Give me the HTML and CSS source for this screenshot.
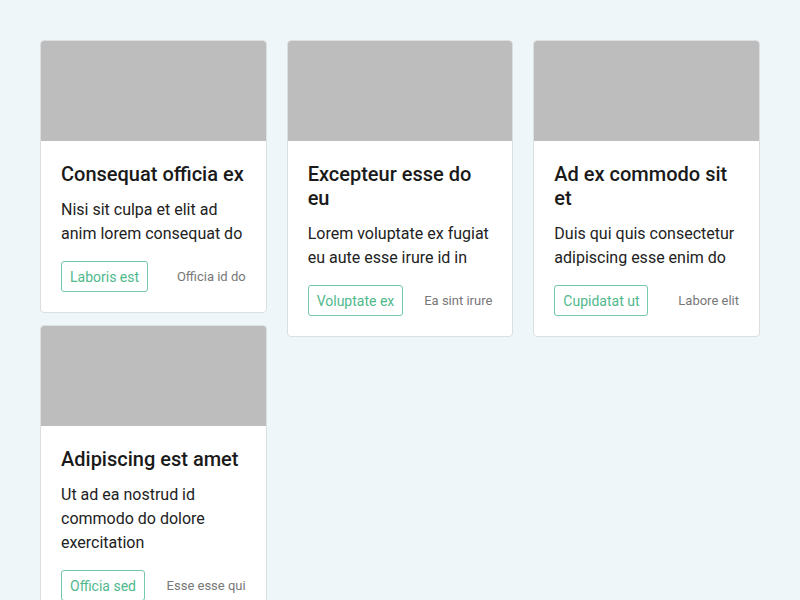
FILE: index.html
```html
<!DOCTYPE html>
<html>
<head>
<meta charset="utf-8">
<link rel="stylesheet" href="styles.css">
</head>
<body>
<div class="masonry">
  <div class="col">
    <div class="card">
      <div class="thumb"></div>
      <div class="body">
        <h2 class="title">Consequat officia ex</h2>
        <p class="text">Nisi sit culpa et elit ad anim lorem consequat do</p>
        <div class="foot"><span class="btn">Laboris est</span><span class="meta">Officia id do</span></div>
      </div>
    </div>
    <div class="card">
      <div class="thumb"></div>
      <div class="body">
        <h2 class="title">Adipiscing est amet</h2>
        <p class="text">Ut ad ea nostrud id commodo do dolore exercitation</p>
        <div class="foot"><span class="btn">Officia sed</span><span class="meta">Esse esse qui</span></div>
      </div>
    </div>
  </div>
  <div class="col">
    <div class="card">
      <div class="thumb"></div>
      <div class="body">
        <h2 class="title">Excepteur esse do eu</h2>
        <p class="text">Lorem voluptate ex fugiat eu aute esse irure id in</p>
        <div class="foot"><span class="btn">Voluptate ex</span><span class="meta">Ea sint irure</span></div>
      </div>
    </div>
  </div>
  <div class="col">
    <div class="card">
      <div class="thumb"></div>
      <div class="body">
        <h2 class="title">Ad ex commodo sit et</h2>
        <p class="text">Duis qui quis consectetur adipiscing esse enim do</p>
        <div class="foot"><span class="btn">Cupidatat ut</span><span class="meta">Labore elit</span></div>
      </div>
    </div>
  </div>
</div>
</body>
</html>
```

FILE: styles.css
```css
html, body {
  margin: 0;
  padding: 0;
  background: #eff6f9;
  font-family: Roboto, "Liberation Sans", sans-serif;
}
.masonry {
  display: grid;
  grid-template-columns: repeat(3, 1fr);
  column-gap: 20px;
  padding: 40px;
  align-items: start;
}
.col {
  display: flex;
  flex-direction: column;
  gap: 12px;
}
.card {
  background: #fff;
  border: 1px solid #dcdfe2;
  border-radius: 4px;
  overflow: hidden;
}
.thumb {
  height: 100px;
  background: #bdbdbd;
}
.body {
  padding: 21px 20px 20px;
}
.title {
  margin: 0 0 12px;
  font-size: 20px;
  line-height: 24px;
  font-weight: 500;
  color: #1a1a1a;
}
.text {
  margin: 0 0 15px;
  font-size: 16px;
  line-height: 24px;
  color: #222;
}
.foot {
  display: flex;
  justify-content: space-between;
  align-items: center;
}
.btn {
  border: 1px solid #72c9a7;
  border-radius: 3px;
  padding: 5px 8px 4px;
  font-size: 14px;
  line-height: 20px;
  color: #4fb98c;
}
.meta {
  font-size: 13px;
  line-height: 20px;
  color: #777;
}
```
